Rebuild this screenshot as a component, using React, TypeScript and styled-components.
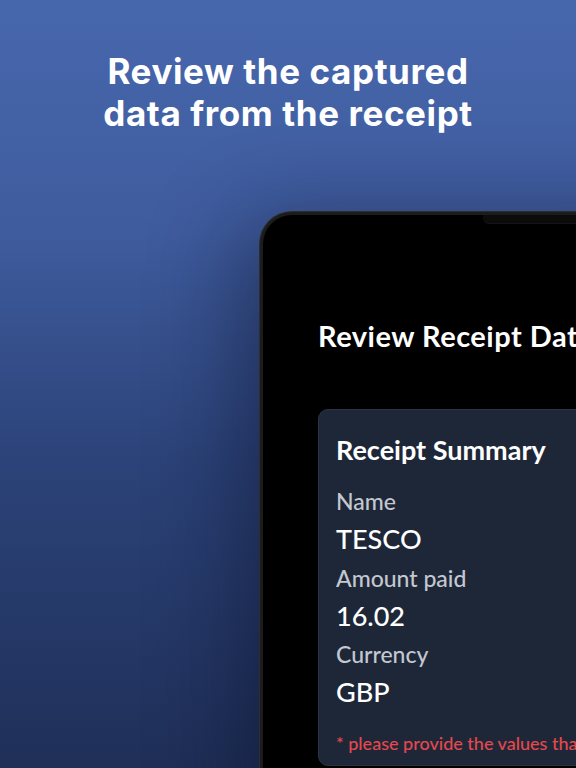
import React from "react";
import styled, { createGlobalStyle } from "styled-components";

const Global = createGlobalStyle`
  html, body { margin: 0; padding: 0; }
  body { width: 576px; height: 768px; overflow: hidden; }
  #root { width: 576px; height: 768px; }
`;

const Page = styled.div`
  width: 576px;
  height: 768px;
  overflow: hidden;
  background: linear-gradient(180deg, #4767ad 0%, #3f5c9e 30%, #2c4379 60%, #1f2f58 100%);
  display: flex;
  flex-direction: column;
`;

const Headline = styled.h1`
  margin: 50px 0 0;
  font-family: "Inter", "Liberation Sans", sans-serif;
  font-weight: 700;
  font-size: 35px;
  line-height: 42px;
  letter-spacing: 0.6px;
  color: #ffffff;
  text-align: center;
`;

const Device = styled.div`
  position: relative;
  margin: 78px 0 0 260px;
  width: 420px;
  height: 620px;
  flex-shrink: 0;
  background: #000;
  border: 3px solid #1c1c1c;
  border-right: none;
  border-radius: 32px 0 0 0;
  box-shadow: 0 0 0 1px #2e2e2e, -20px 10px 90px rgba(8, 14, 35, 0.45);
  padding: 103px 0 0 55px;
  box-sizing: border-box;
`;

const Notch = styled.div`
  position: absolute;
  top: 0;
  left: 220px;
  right: 0;
  height: 8px;
  background: #0b0b0b;
  border-bottom-left-radius: 6px;
  border-bottom: 1px solid #151515;
`;

const ScreenTitle = styled.h2`
  margin: 0;
  font-family: "Lato", "Noto Sans", sans-serif;
  font-weight: 700;
  font-size: 29px;
  line-height: 36px;
  letter-spacing: 0.5px;
  color: #ffffff;
  white-space: nowrap;
`;

const Card = styled.section`
  margin-top: 55px;
  background: #1e2738;
  border: 1px solid #2c3547;
  border-radius: 10px;
  padding: 20px 17px 10px;
  display: flex;
  flex-direction: column;
  white-space: nowrap;
`;

const CardTitle = styled.h3`
  margin: 0 0 12px;
  font-family: "Lato", "Noto Sans", sans-serif;
  font-weight: 700;
  font-size: 27px;
  line-height: 40px;
  color: #ffffff;
`;

const Label = styled.div`
  font-family: "Lato", "Noto Sans", sans-serif;
  font-weight: 500;
  font-size: 23px;
  line-height: 38.3px;
  color: #c4c8d0;
`;

const Value = styled.div`
  font-family: "Lato", "Noto Sans", sans-serif;
  font-weight: 500;
  font-size: 27px;
  line-height: 38.3px;
  color: #ffffff;
`;

const Note = styled.p`
  margin: 19px 0 0;
  font-family: "Lato", "Noto Sans", sans-serif;
  font-weight: 500;
  font-size: 18px;
  line-height: 24px;
  color: #e5484d;
`;

const fields = [
  { label: "Name", value: "TESCO" },
  { label: "Amount paid", value: "16.02" },
  { label: "Currency", value: "GBP" },
];

export default function App() {
  return (
    <>
      <Global />
      <Page>
        <Headline>
          Review the captured
          <br />
          data from the receipt
        </Headline>
        <Device>
          <Notch />
          <ScreenTitle>Review Receipt Data</ScreenTitle>
          <Card>
            <CardTitle>Receipt Summary</CardTitle>
            {fields.map((f) => (
              <React.Fragment key={f.label}>
                <Label>{f.label}</Label>
                <Value>{f.value}</Value>
              </React.Fragment>
            ))}
            <Note>* please provide the values that are missing</Note>
          </Card>
        </Device>
      </Page>
    </>
  );
}
